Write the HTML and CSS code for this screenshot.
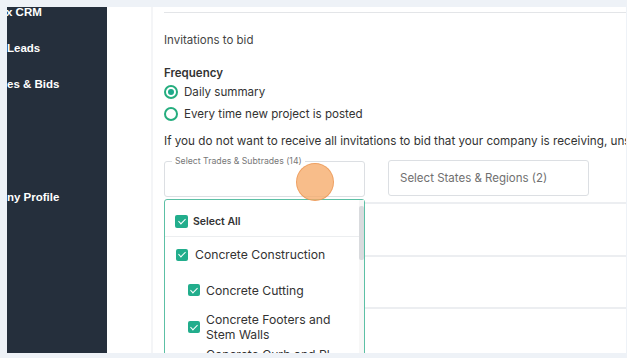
FILE: index.html
```html
<!DOCTYPE html>
<html>
<head>
<meta charset="utf-8">
<link rel="stylesheet" href="styles.css">
</head>
<body>
<div class="frame">
  <nav class="sidebar">
    <div class="nav-item nav-first">x CRM</div>
    <div class="nav-item">Leads</div>
    <div class="nav-item">es &amp; Bids</div>
    <div class="nav-item nav-profile">ny Profile</div>
  </nav>
  <main class="main">
    <div class="gutter"></div>
    <section class="panel">
      <div class="top-rule"></div>
      <div class="content">
        <p class="section-title">Invitations to bid</p>
        <p class="label">Frequency</p>
        <label class="radio-row"><span class="radio checked"></span>Daily summary</label>
        <label class="radio-row"><span class="radio"></span>Every time new project is posted</label>
        <p class="note">If you do not want to receive all invitations to bid that your company is receiving, uns</p>
        <div class="selects">
          <div class="field">
            <span class="legend">Select Trades &amp; Subtrades (14)</span>
          </div>
          <div class="field field-plain">Select States &amp; Regions (2)</div>
        </div>
      </div>
      <div class="row row-a"></div>
      <div class="row row-b"></div>
      <div class="row row-c"></div>

      <div class="dropdown">
        <div class="dd-head">
          <span class="cb"></span><span class="dd-all">Select All</span>
        </div>
        <div class="dd-list">
          <div class="dd-item lvl1"><span class="cb"></span><span>Concrete Construction</span></div>
          <div class="dd-item lvl2"><span class="cb"></span><span>Concrete Cutting</span></div>
          <div class="dd-item lvl2 two"><span class="cb"></span><span>Concrete Footers and<br>Stem Walls</span></div>
          <div class="dd-item lvl2 last"><span class="cb"></span><span>Concrete Curb and Pl<br>Walls</span></div>
        </div>
        <div class="scrollbar"><div class="thumb"></div></div>
      </div>
      <div class="cursor"></div>
    </section>
  </main>
</div>
</body>
</html>
```

FILE: styles.css
```css
* { box-sizing: border-box; }
html, body { margin: 0; padding: 0; }
body {
  width: 627px;
  height: 358px;
  background: #eef2f7;
  overflow: hidden;
  font-family: Inter, "Noto Sans", sans-serif;
  color: #333;
}
.frame {
  display: flex;
  height: 358px;
  padding: 7px 1px 5px 7px;
}
.sidebar {
  width: 100px;
  flex: none;
  background: #252f3c;
  color: #fff;
  font-family: "Liberation Sans", Arial, sans-serif;
  font-weight: bold;
  font-size: 11.5px;
  overflow: hidden;
  white-space: nowrap;
}
.nav-item { height: 14px; line-height: 14px; }
.nav-first { margin-top: -2px; margin-left: -1px; }
.nav-item + .nav-item { margin-top: 22px; }
.nav-item.nav-profile { margin-top: 99px; }
.main {
  flex: 1;
  display: flex;
  background: #fff;
  overflow: hidden;
}
.gutter { width: 44px; flex: none; }
.panel {
  flex: 1;
  position: relative;
  border-left: 2px solid #f4f5f7;
  padding-left: 11px;
}
.top-rule {
  margin-top: 5px;
  border-top: 1px solid #e3e5e8;
}
p { margin: 0; }
.section-title {
  margin-top: 20px;
  font-size: 11.5px;
  line-height: 14px;
  color: #444;
}
.label {
  margin-top: 19px;
  font-size: 11.5px;
  line-height: 14px;
  font-weight: 600;
  color: #333;
}
.radio-row {
  display: flex;
  align-items: center;
  height: 22px;
  font-size: 11.6px;
  color: #333;
}
.label + .radio-row { margin-top: 1px; }
.radio {
  width: 14px;
  height: 14px;
  border-radius: 50%;
  border: 2px solid #25ad7e;
  margin-right: 6px;
  flex: none;
  position: relative;
}
.radio.checked::after {
  content: "";
  position: absolute;
  left: 2px; top: 2px;
  width: 6px; height: 6px;
  border-radius: 50%;
  background: #1ea98a;
}
.note {
  margin-top: 8px;
  font-size: 11.7px;
  line-height: 16px;
  white-space: nowrap;
  color: #333;
}
.selects {
  display: flex;
  gap: 23px;
  margin-top: 12px;
}
.field {
  width: 201px;
  height: 36px;
  border: 1px solid #dcdfe3;
  border-radius: 3px;
  position: relative;
  font-size: 11.5px;
  color: #707070;
}
.field-plain {
  display: flex;
  align-items: center;
  padding-left: 11px;
  margin-top: -1px;
}
.legend {
  position: absolute;
  left: 7px;
  top: -6px;
  padding: 0 3px;
  background: #fff;
  font-size: 8.7px;
  line-height: 10px;
  color: #777;
}
.row { border-bottom: 2px solid #eceef1; }
.row-a { height: 7px; }
.row-b { height: 53px; }
.row-c { height: 52px; }

.dropdown {
  position: absolute;
  left: 11px;
  top: 192px;
  width: 201px;
  height: 180px;
  border: 1px solid #5cc0a5;
  border-radius: 3px;
  background: #fff;
  font-size: 12.2px;
  color: #333;
}
.cb {
  width: 12px;
  height: 12px;
  border-radius: 2px;
  background: #22ad8c;
  flex: none;
  position: relative;
}
.cb::after {
  content: "";
  position: absolute;
  left: 4px; top: 1.5px;
  width: 3px; height: 6px;
  border: solid #fff;
  border-width: 0 1.5px 1.5px 0;
  transform: rotate(45deg);
}
.dd-head {
  height: 37px;
  display: flex;
  align-items: center;
  padding-left: 10px;
  padding-top: 6px;
  border-bottom: 1px solid #eceef0;
  margin-right: 4px;
}
.dd-head .cb { width: 13px; height: 13px; margin-right: 5px; }
.dd-head .cb::after { left: 4.5px; top: 2px; }
.dd-all { font-size: 10.5px; font-weight: 600; color: #333; }
.dd-item {
  display: flex;
  align-items: center;
  gap: 7px;
  line-height: 15px;
  white-space: nowrap;
}
.lvl1 { padding-left: 11px; height: 35px; }
.lvl2 { padding-left: 23px; gap: 6px; height: 36px; }
.lvl2.two { height: 34px; margin-top: 2px; }
.lvl2.last { height: 36px; margin-top: 0; }
.scrollbar {
  position: absolute;
  right: 0;
  top: 0;
  bottom: 0;
  width: 5px;
  background: #f7f7f7;
}
.thumb {
  margin-top: 6px;
  height: 54px;
  background: #d9dbde;
  border-radius: 2px;
}
.cursor {
  position: absolute;
  left: 143px;
  top: 156px;
  width: 38px;
  height: 38px;
  border-radius: 50%;
  background: rgba(246, 170, 105, 0.78);
  border: 1.5px solid rgba(232, 140, 70, 0.6);
}
```
